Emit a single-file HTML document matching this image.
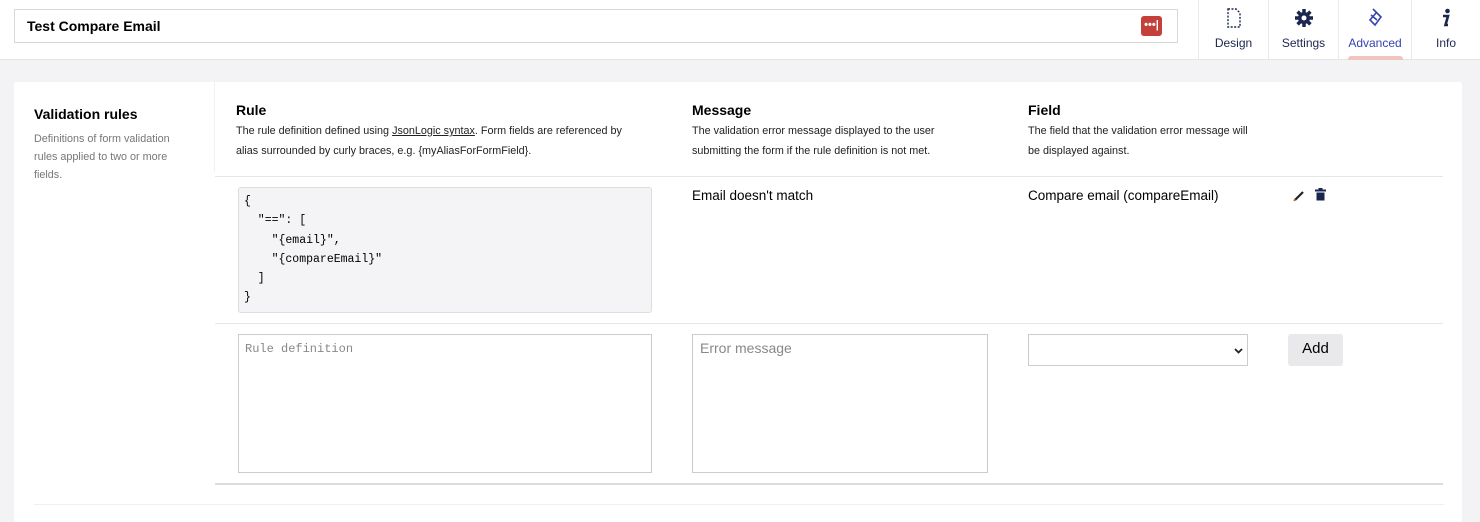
<!DOCTYPE html>
<html><head><style>
*{box-sizing:border-box}
body{margin:0;width:1480px;height:506px;overflow:hidden;background:#f3f3f5;font-family:"Liberation Sans",sans-serif;color:#1b264f;position:relative}
.top{position:absolute;left:0;top:0;width:1480px;height:60px;background:#fff;border-bottom:1px solid #e4e4e4}
.name{position:absolute;left:14px;top:9px;width:1164px;height:34px;border:1px solid #d8d8d8;font-weight:bold;font-size:14px;color:#000;padding:8px 12px}
.dots{position:absolute;left:1141px;top:16px;width:21px;height:20px;background:#c5403a;border-radius:3px;color:#fff;font-size:11px;text-align:center;line-height:18px;font-weight:bold}
.tab{position:absolute;top:0;height:60px;border-left:1px solid #e9e9e9;text-align:center;font-size:12px;color:#1b264f}
.tab .lbl{position:absolute;left:0;right:0;top:36px}
.tab svg{position:absolute;left:50%;transform:translateX(-50%);top:8px}
.card{position:absolute;left:14px;top:82px;width:1448px;height:440px;background:#fff;border-radius:3px}
.abs{position:absolute}
h4{margin:0;font-size:14px;font-weight:bold;color:#000}
.desc{font-size:10.8px;line-height:20px;color:#222}
.gray{color:#777}
.code{position:absolute;left:238px;top:187px;width:414px;height:126px;background:#f4f4f6;border:1px solid #ddd;border-radius:3px;font-family:"Liberation Mono",monospace;font-size:11.5px;line-height:19.3px;padding:4px 5px;white-space:pre;color:#000}
.ta{position:absolute;border:1px solid #ccc;background:#fff}
</style></head><body>
<div class="top">
 <div class="name">Test Compare Email</div>
 <div class="dots">•••|</div>
 <div class="tab" style="left:1198px;width:70px"><svg width="14" height="20" viewBox="0 0 14 20"><path d="M1 1h8l4 4v14H1z" fill="none" stroke="#1b264f" stroke-width="1.4" stroke-dasharray="2 1.5"/></svg><div class="lbl">Design</div></div>
 <div class="tab" style="left:1268px;width:70px"><svg width="20" height="20" viewBox="0 0 20 20"><circle cx="10" cy="10" r="6" fill="#1b264f"/><g stroke="#1b264f" stroke-width="3.5"><path d="M10 1v18M1 10h18M3.6 3.6l12.8 12.8M16.4 3.6L3.6 16.4"/></g><circle cx="10" cy="10" r="2.5" fill="#fff"/></svg><div class="lbl">Settings</div></div>
 <div class="tab" style="left:1338px;width:73px;color:#3544b1"><svg width="18" height="20" viewBox="0 0 18 20"><path d="M7 1l8 8-6 8-5-5 6-7M5 7l6 5" fill="none" stroke="#3544b1" stroke-width="1.6"/></svg><div class="lbl">Advanced</div><div class="abs" style="left:9px;right:8px;top:56px;height:4px;background:#f0c5c0;border-radius:3px 3px 0 0"></div></div>
 <div class="tab" style="left:1411px;width:69px"><svg width="12" height="20" viewBox="0 0 12 20"><circle cx="7.5" cy="3" r="2.3" fill="#1b264f"/><path d="M3 8h5l-2.5 9H8" fill="none" stroke="#1b264f" stroke-width="2.6"/></svg><div class="lbl">Info</div></div>
</div>
<div class="card"></div>
<div class="abs" style="left:34px;top:106px"><h4>Validation rules</h4></div>
<div class="abs desc gray" style="left:34px;top:130px;width:152px;line-height:18px">Definitions of form validation rules applied to two or more fields.</div>
<div class="abs" style="left:214px;top:82px;width:1px;height:90px;background:#f0f0f0"></div>
<div class="abs" style="left:215px;top:176px;width:1228px;height:1px;background:#e6e6e6"></div>
<div class="abs" style="left:236px;top:102px"><h4>Rule</h4></div>
<div class="abs desc" style="left:236px;top:121px;width:405px">The rule definition defined using <u>JsonLogic syntax</u>. Form fields are referenced by alias surrounded by curly braces, e.g. {myAliasForFormField}.</div>
<div class="abs" style="left:692px;top:102px"><h4>Message</h4></div>
<div class="abs desc" style="left:692px;top:121px;width:280px">The validation error message displayed to the user submitting the form if the rule definition is not met.</div>
<div class="abs" style="left:1028px;top:102px"><h4>Field</h4></div>
<div class="abs desc" style="left:1028px;top:121px;width:230px">The field that the validation error message will be displayed against.</div>
<div class="code">{
  "==": [
    "{email}",
    "{compareEmail}"
  ]
}</div>
<div class="abs" style="left:692px;top:188px;font-size:13.5px;color:#000">Email doesn't match</div>
<div class="abs" style="left:1028px;top:188px;font-size:13.5px;color:#000">Compare email (compareEmail)</div>
<svg class="abs" style="left:1293px;top:189px" width="13" height="13" viewBox="0 0 13 13"><path d="M2 11l8-8" stroke="#222" stroke-width="2.2"/><path d="M1 12l1-2" stroke="#a63" stroke-width="1.5"/></svg>
<svg class="abs" style="left:1315px;top:188px" width="11" height="13" viewBox="0 0 11 13"><rect x="0" y="1.5" width="11" height="2" fill="#1b264f"/><rect x="3.5" y="0" width="4" height="2" fill="#1b264f"/><rect x="1.5" y="4.5" width="8" height="8" fill="#1b264f"/></svg>
<div class="abs" style="left:215px;top:323px;width:1228px;height:1px;background:#e6e6e6"></div>
<div class="ta" style="left:238px;top:334px;width:414px;height:139px;font-family:'Liberation Mono',monospace;font-size:12px;color:#888;padding:7px 6px">Rule definition</div>
<div class="ta" style="left:692px;top:334px;width:296px;height:139px;font-size:14px;color:#888;padding:5px 7px">Error message</div>
<div class="ta" style="left:1028px;top:334px;width:220px;height:32px"><svg class="abs" style="left:205px;top:13px" width="9" height="6" viewBox="0 0 9 6"><path d="M1 1l3.5 3.5L8 1" fill="none" stroke="#222" stroke-width="1.8"/></svg></div>
<div class="abs" style="left:1288px;top:334px;width:55px;height:32px;background:#e9e9eb;border-radius:3px;font-size:15px;color:#000;text-align:center;line-height:30px">Add</div>
<div class="abs" style="left:215px;top:483px;width:1228px;height:2px;background:#ddd"></div>
<div class="abs" style="left:34px;top:504px;width:1410px;height:1px;background:#efefef"></div>
</body></html>
